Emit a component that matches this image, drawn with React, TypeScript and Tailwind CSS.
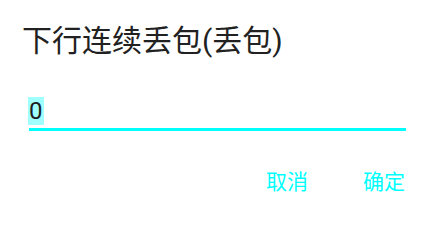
export default function App() {
  const font = { fontFamily: 'Roboto, "Noto Sans CJK SC", sans-serif' };
  return (
    <div className="w-[424px] h-[220px] bg-white flex flex-col" style={font}>
      <div className="pl-[22px] pt-[26px] text-[30px] leading-[30px] text-[#212121]">
        下行连续丢包(丢包)
      </div>
      <div className="ml-[29px] mr-[18px] mt-[41px] pb-[3px] border-b-[3px] border-[#00ffff] flex">
        <span className="-ml-[1px] bg-[#a0ffff] text-[24px] leading-[28px] text-[#1c1c1c] px-[1px]">0</span>
      </div>
      <div className="flex justify-end gap-[55px] pr-[19px] mt-[40px] text-[21px] leading-[22px] text-[#00ffff]">
        <span>取消</span>
        <span>确定</span>
      </div>
    </div>
  );
}
